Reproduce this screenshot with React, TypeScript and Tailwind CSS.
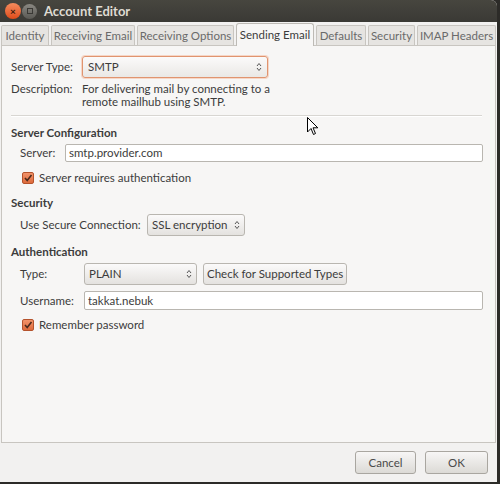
import React from 'react';

const tabs = [
  { label: 'Identity', w: 'w-[48px]' },
  { label: 'Receiving Email', w: 'w-[84px]' },
  { label: 'Receiving Options', w: 'w-[97px]' },
  { label: 'Sending Email', w: 'w-[78px]' },
  { label: 'Defaults', w: 'w-[50px]' },
  { label: 'Security', w: 'w-[47px]' },
  { label: 'IMAP Headers', w: 'w-[79px]' },
];

function Spinner() {
  return (
    <svg width="6" height="10" viewBox="0 0 6 10" className="shrink-0">
      <path d="M1 4 L3 1.5 L5 4" fill="none" stroke="#555" strokeWidth="1" />
      <path d="M1 6 L3 8.5 L5 6" fill="none" stroke="#555" strokeWidth="1" />
    </svg>
  );
}

function Check() {
  return (
    <div className="w-[12px] h-[12px] rounded-[2px] border border-[#b5532c] bg-gradient-to-b from-[#f2936a] to-[#dd6a3b] flex items-center justify-center shrink-0">
      <svg width="10" height="10" viewBox="0 0 10 10">
        <path d="M2 5 L4.2 7.5 L8.5 2" fill="none" stroke="#4a2a1c" strokeWidth="1.6" />
      </svg>
    </div>
  );
}

function Cursor() {
  return (
    <svg width="12" height="19" viewBox="0 0 12 19" className="absolute left-[307px] top-[117px]">
      <path d="M0.5 0.5 L0.5 15 L4 11.5 L6.5 17.5 L8.5 16.5 L6 10.8 L10.8 10.8 Z" fill="#fff" stroke="#000" strokeWidth="1" />
    </svg>
  );
}

export default function App() {
  return (
    <div className="w-[500px] h-[484px] bg-[#2c2b28] relative overflow-hidden text-[11.5px] leading-[16px] text-[#3c3c3c] whitespace-nowrap" style={{ fontFamily: 'Lato, "Liberation Sans", sans-serif' }}>
      <div className="mr-[3px] h-[482px] bg-[#f2f1f0] flex flex-col rounded-tr-[6px] overflow-hidden">
        {/* Title bar */}
        <div className="h-[22px] bg-gradient-to-b from-[#47463f] to-[#3a3935] flex items-center pl-[5px]">
          <div className="w-[16px] h-[16px] rounded-full bg-gradient-to-b from-[#f48b5c] to-[#df4a16] flex items-center justify-center text-[#3a1a0c] text-[10px] font-bold leading-none">×</div>
          <div className="ml-[1px] w-[15px] h-[15px] rounded-full bg-gradient-to-b from-[#8a8882] to-[#5a5954] flex items-center justify-center">
            <div className="w-[6px] h-[6px] border border-[#3a3935]" />
          </div>
          <div className="ml-[7px] text-[#dfdbd2] font-bold text-[13px]">Account Editor</div>
        </div>

        {/* Tabs */}
        <div className="h-[23px] flex items-end gap-[2px] pl-[1px] bg-[#f2f1f0]">
          {tabs.map((t) => (
            t.label === 'Sending Email' ? (
              <div key={t.label} className={`${t.w} h-[23px] bg-[#f7f6f5] border border-b-0 border-[#bdbab5] rounded-t-[3px] flex items-center justify-center text-[#3c3c3c] relative -mb-[1px] z-10`}>
                {t.label}
              </div>
            ) : (
              <div key={t.label} className={`${t.w} h-[20px] bg-[#e6e4e1] border border-b-0 border-[#c8c5c0] rounded-t-[2px] flex items-center justify-center text-[#6a6a6a]`}>
                {t.label}
              </div>
            )
          ))}
        </div>

        {/* Panel */}
        <div className="ml-[1px] mr-[1px] h-[398px] bg-[#f7f6f5] border border-[#c8c5c0] px-[9px] pt-[10px]">
          <div className="flex items-center h-[22px]">
            <div className="w-[71px]">Server Type:</div>
            <div className="w-[186px] h-[22px] border border-[#e0946f] rounded-[3px] bg-gradient-to-b from-[#fbfafa] to-[#eae8e5] flex items-center justify-between px-[5px] shadow-[0_0_0_1px_#f6d6c6]">
              <span>SMTP</span>
              <Spinner />
            </div>
          </div>
          <div className="flex mt-[4px] leading-[13px]">
            <div className="w-[71px]">Description:</div>
            <div className="flex flex-col">
              <span>For delivering mail by connecting to a</span>
              <span>remote mailhub using SMTP.</span>
            </div>
          </div>
          <div className="mt-[7px] mr-[4px] border-t border-[#d8d6d2] border-b-white border-b h-[2px]" />

          <div className="mt-[8px] font-bold">Server Configuration</div>
          <div className="flex items-center mt-[3px] pl-[9px]">
            <div className="w-[45px]">Server:</div>
            <div className="flex-1 mr-[3px] h-[18px] bg-white border border-[#b9b6b0] rounded-[2px] flex items-center pl-[3px]">smtp.provider.com</div>
          </div>
          <div className="flex items-center mt-[8px] pl-[11px] gap-[5px]">
            <Check />
            <span>Server requires authentication</span>
          </div>

          <div className="mt-[9px] font-bold">Security</div>
          <div className="flex items-center mt-[3px] pl-[9px]">
            <div className="w-[127px]">Use Secure Connection:</div>
            <div className="w-[98px] h-[22px] border border-[#b9b6b0] rounded-[3px] bg-gradient-to-b from-[#fbfafa] to-[#e4e2df] flex items-center justify-between px-[4px]">
              <span>SSL encryption</span>
              <Spinner />
            </div>
          </div>

          <div className="mt-[8px] font-bold">Authentication</div>
          <div className="flex items-center mt-[3px] pl-[9px]">
            <div className="w-[64px]">Type:</div>
            <div className="w-[113px] h-[22px] border border-[#b9b6b0] rounded-[3px] bg-gradient-to-b from-[#fbfafa] to-[#e4e2df] flex items-center justify-between px-[4px]">
              <span>PLAIN</span>
              <Spinner />
            </div>
            <div className="ml-[6px] h-[22px] px-[3px] border border-[#b9b6b0] rounded-[3px] bg-gradient-to-b from-[#fbfafa] to-[#e4e2df] flex items-center">Check for Supported Types</div>
          </div>
          <div className="flex items-center mt-[6px] pl-[9px]">
            <div className="w-[64px]">Username:</div>
            <div className="flex-1 mr-[3px] h-[19px] bg-white border border-[#b9b6b0] rounded-[2px] flex items-center pl-[3px]">takkat.nebuk</div>
          </div>
          <div className="flex items-center mt-[7px] pl-[11px] gap-[5px]">
            <Check />
            <span>Remember password</span>
          </div>
        </div>

        {/* Buttons */}
        <div className="flex-1 flex items-center justify-end gap-[9px] pr-[9px]">
          <div className="w-[61px] h-[23px] border border-[#a9a6a0] rounded-[3px] bg-gradient-to-b from-[#f7f6f5] to-[#dcdad6] flex items-center justify-center text-[#4a4a4a]">Cancel</div>
          <div className="w-[63px] h-[23px] border border-[#a9a6a0] rounded-[3px] bg-gradient-to-b from-[#f7f6f5] to-[#dcdad6] flex items-center justify-center text-[#4a4a4a]">OK</div>
        </div>
      </div>
      <Cursor />
    </div>
  );
}
